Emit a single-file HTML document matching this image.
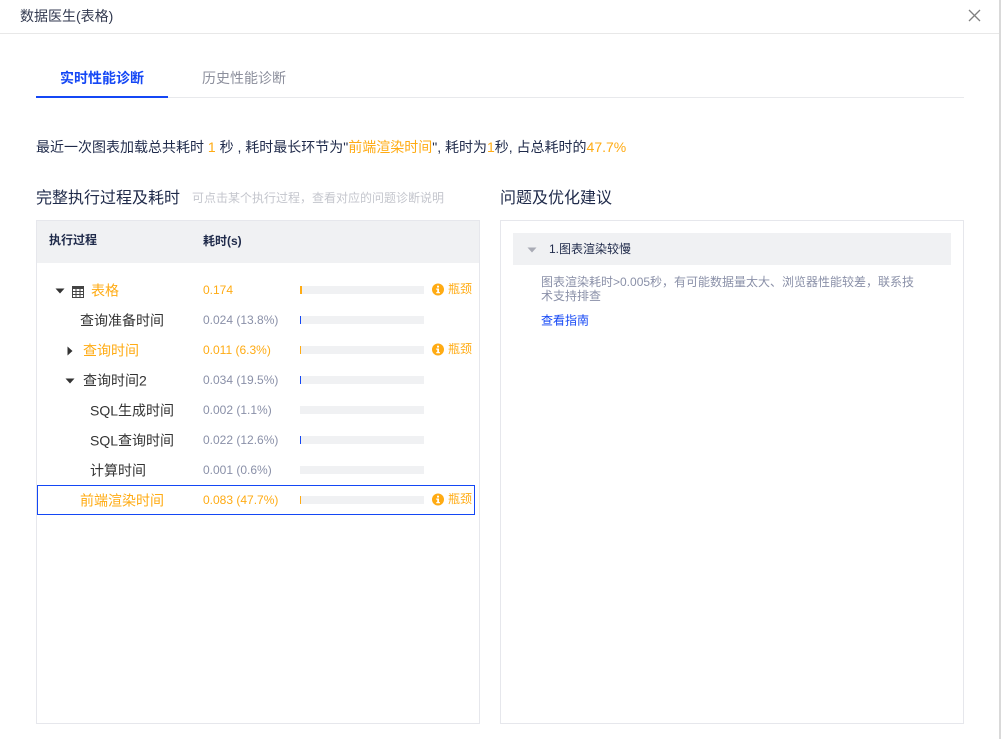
<!DOCTYPE html>
<html lang="zh">
<head>
<meta charset="utf-8">
<title>数据医生(表格)</title>
<style>
*{box-sizing:border-box}
html,body{margin:0;padding:0;width:1001px;height:739px;overflow:hidden;background:#fff}
body{position:relative;font-family:"Liberation Sans","Noto Sans CJK SC",sans-serif;color:#1f2a4a}
.a{position:absolute;white-space:nowrap}
.t{height:20px;line-height:20px;font-size:14px}
.n{height:20px;line-height:20px;font-size:14px;color:#333}
.h{transform:translateY(.5px);will-change:transform}
.v{font-size:12px;height:20px;line-height:20px;color:#8a90a8}
.o,.v.o{color:#ffab13}
.bar{position:absolute;left:300px;width:124px;height:8px;background:#f0f1f3}
.bar i{position:absolute;left:0;top:0;height:8px;display:block}
.b{font-size:12px;height:20px;line-height:20px;color:#ffab13;left:448px}
</style>
</head>
<body>
<div class="a" style="left:999px;top:0;width:2px;height:739px;background:#d9d9d9"></div>
<div class="a" style="left:0;top:33px;width:999px;height:1px;background:#e8e8e8"></div>
<div class="a" style="left:20px;top:6px;font-size:14px;line-height:20px;color:#333a50">数据医生(表格)</div>
<svg class="a" style="left:968px;top:9px" width="13" height="13" viewBox="0 0 13 13"><path d="M1 1L12 12M12 1L1 12" stroke="#808080" stroke-width="1.3" fill="none"/></svg>

<div class="a" style="left:36px;top:97px;width:928px;height:1px;background:#e8e9ec"></div>
<div class="a" style="left:36px;top:96px;width:132px;height:2px;background:#1447f5"></div>
<div class="a" style="left:60px;top:68px;font-size:14px;line-height:20px;font-weight:bold;color:#1447f5">实时性能诊断</div>
<div class="a" style="left:202px;top:68px;font-size:14px;line-height:20px;color:#8c8f9c">历史性能诊断</div>

<div class="a t" style="left:36px;top:137px;color:#1f2a4a">最近一次图表加载总共耗时 <span class="o">1</span> 秒 , 耗时最长环节为"<span class="o">前端渲染时间</span>", 耗时为<span class="o">1</span>秒, 占总耗时的<span class="o">47.7%</span></div>

<div class="a" style="left:36px;top:188px;font-size:16px;line-height:22px;color:#1f2a4a">完整执行过程及耗时</div>
<div class="a" style="left:192px;top:189px;font-size:12px;line-height:18px;color:#c4c6cd">可点击某个执行过程，查看对应的问题诊断说明</div>
<div class="a" style="left:500px;top:188px;font-size:16px;line-height:22px;color:#1f2a4a">问题及优化建议</div>

<div class="a" style="left:36px;top:220px;width:444px;height:504px;border:1px solid #e6e7ec"></div>
<div class="a" style="left:37px;top:221px;width:442px;height:42px;background:#f0f1f3"></div>
<div class="a" style="left:49px;top:230px;font-size:12px;line-height:20px;font-weight:bold;color:#1f2a4a">执行过程</div>
<div class="a" style="left:203px;top:231px;font-size:12px;line-height:20px;font-weight:bold;color:#1f2a4a">耗时(s)</div>

<!-- rows -->
<svg class="a" style="left:55px;top:288px" width="10" height="6"><path d="M0.5 0.5H9.5L5 5.5Z" fill="#333"/></svg>
<svg class="a" style="left:72px;top:286px" width="12" height="12" viewBox="0 0 12 12"><rect x=".5" y=".5" width="11" height="11" fill="none" stroke="#444"/><rect x="0" y="0" width="12" height="3" fill="#444"/><path d="M0 5.5H12M0 8.5H12M4 3V12M8 3V12" stroke="#444" stroke-width="1"/></svg>
<div class="a t o h" style="left:91px;top:280px">表格</div>
<div class="a v o" style="left:203px;top:280px">0.174</div>
<div class="bar" style="top:286px"><i style="width:2px;background:#ffab13"></i></div>
<svg class="a" style="left:432px;top:283px" width="12" height="13" viewBox="0 0 12 13"><circle cx="6" cy="6.5" r="6" fill="#ffab13"/><rect x="5" y="2.7" width="2" height="1.8" fill="#fff"/><path d="M4.2 5.5H7V9.1H8V10.3H4.2V9.1H5.2V6.7H4.2Z" fill="#fff"/></svg>
<div class="a b" style="top:279px">瓶颈</div>

<div class="a n h" style="left:80px;top:310px">查询准备时间</div>
<div class="a v" style="left:203px;top:310px">0.024 (13.8%)</div>
<div class="bar" style="top:316px"><i style="width:1px;background:#1447f5"></i></div>

<svg class="a" style="left:67px;top:346px" width="6" height="10"><path d="M0.5 0.5V9.5L5.5 5Z" fill="#333"/></svg>
<div class="a t o h" style="left:83px;top:340px">查询时间</div>
<div class="a v o" style="left:203px;top:340px">0.011 (6.3%)</div>
<div class="bar" style="top:346px"><i style="width:1px;background:#ffab13"></i></div>
<svg class="a" style="left:432px;top:343px" width="12" height="13" viewBox="0 0 12 13"><circle cx="6" cy="6.5" r="6" fill="#ffab13"/><rect x="5" y="2.7" width="2" height="1.8" fill="#fff"/><path d="M4.2 5.5H7V9.1H8V10.3H4.2V9.1H5.2V6.7H4.2Z" fill="#fff"/></svg>
<div class="a b" style="top:339px">瓶颈</div>

<svg class="a" style="left:65px;top:378px" width="10" height="6"><path d="M0.5 0.5H9.5L5 5.5Z" fill="#333"/></svg>
<div class="a n h" style="left:83px;top:370px">查询时间2</div>
<div class="a v" style="left:203px;top:370px">0.034 (19.5%)</div>
<div class="bar" style="top:376px"><i style="width:1px;background:#1447f5"></i></div>

<div class="a n h" style="left:90px;top:400px">SQL生成时间</div>
<div class="a v" style="left:203px;top:400px">0.002 (1.1%)</div>
<div class="bar" style="top:406px"></div>

<div class="a n h" style="left:90px;top:430px">SQL查询时间</div>
<div class="a v" style="left:203px;top:430px">0.022 (12.6%)</div>
<div class="bar" style="top:436px"><i style="width:1px;background:#1447f5"></i></div>

<div class="a n h" style="left:90px;top:460px">计算时间</div>
<div class="a v" style="left:203px;top:460px">0.001 (0.6%)</div>
<div class="bar" style="top:466px"></div>

<div class="a" style="left:37px;top:485px;width:438px;height:30px;border:1px solid #1447f5"></div>
<div class="a t o h" style="left:80px;top:490px">前端渲染时间</div>
<div class="a v o" style="left:203px;top:490px">0.083 (47.7%)</div>
<div class="bar" style="top:496px"><i style="width:1px;background:#ffab13"></i></div>
<svg class="a" style="left:432px;top:493px" width="12" height="13" viewBox="0 0 12 13"><circle cx="6" cy="6.5" r="6" fill="#ffab13"/><rect x="5" y="2.7" width="2" height="1.8" fill="#fff"/><path d="M4.2 5.5H7V9.1H8V10.3H4.2V9.1H5.2V6.7H4.2Z" fill="#fff"/></svg>
<div class="a b" style="top:489px">瓶颈</div>

<!-- right panel -->
<div class="a" style="left:500px;top:220px;width:464px;height:504px;border:1px solid #e6e7ec"></div>
<div class="a" style="left:513px;top:233px;width:438px;height:32px;background:#f0f1f3"></div>
<svg class="a" style="left:527px;top:247px" width="10" height="6"><path d="M0.5 0.5H9.5L5 5.5Z" fill="#a9abb5"/></svg>
<div class="a" style="left:549px;top:239px;font-size:12px;line-height:20px;color:#1f2a4a">1.图表渲染较慢</div>
<div class="a" style="left:541px;top:275px;width:380px;font-size:12px;line-height:14px;color:#8a90a8;white-space:normal">图表渲染耗时&gt;0.005秒，有可能数据量太大、浏览器性能较差，联系技术支持排查</div>
<div class="a h" style="left:541px;top:311px;font-size:12px;line-height:18px;color:#1447f5">查看指南</div>
</body>
</html>
